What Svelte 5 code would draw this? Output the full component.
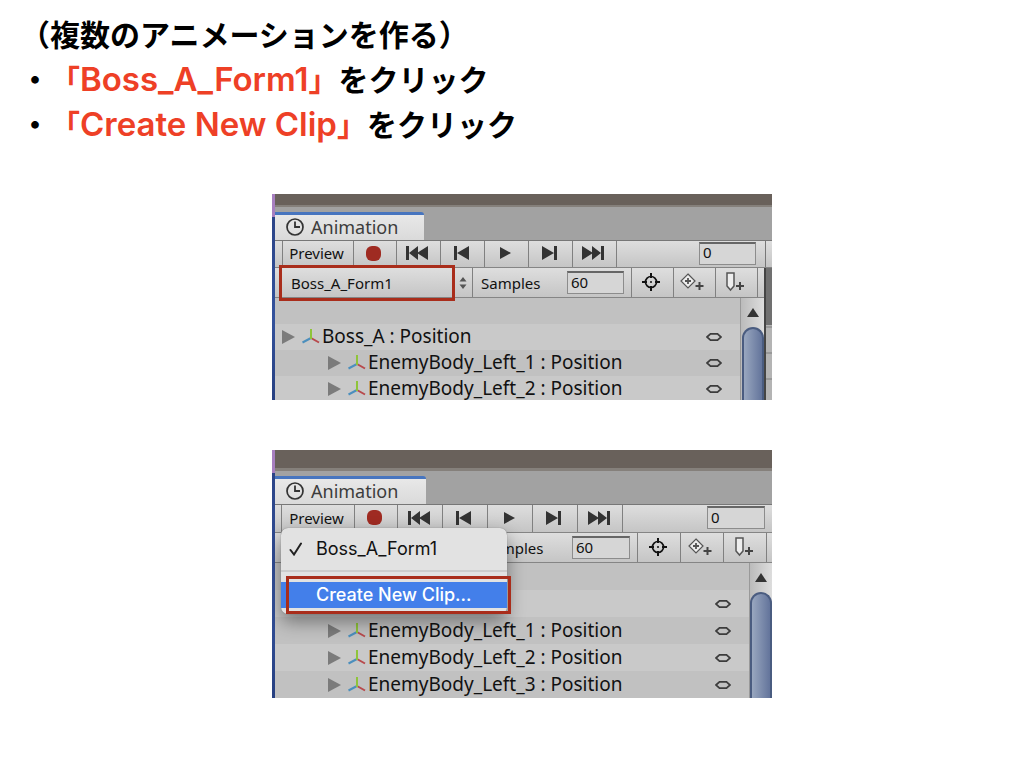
<script lang="ts">
  type Panel = {
    id: string;
    menuOpen: boolean;
    rows: { label: string; child: boolean }[];
  };

  const clip = "Boss_A_Form1";

  const panels: Panel[] = [
    {
      id: "closed",
      menuOpen: false,
      rows: [
        { label: "Boss_A : Position", child: false },
        { label: "EnemyBody_Left_1 : Position", child: true },
        { label: "EnemyBody_Left_2 : Position", child: true },
      ],
    },
    {
      id: "open",
      menuOpen: true,
      rows: [
        { label: "", child: false },
        { label: "EnemyBody_Left_1 : Position", child: true },
        { label: "EnemyBody_Left_2 : Position", child: true },
        { label: "EnemyBody_Left_3 : Position", child: true },
      ],
    },
  ];

  const transport = [
    { label: "First frame", d: "M0 1h3v14H0zM12 1v14L3 8zM22 1v14L11 8z", w: 22 },
    { label: "Previous key", d: "M0 1h3v14H0zM15 1v14L3 8z", w: 15 },
    { label: "Play", d: "M1 2l11 6-11 6z", w: 12 },
    { label: "Next key", d: "M0 1l12 7-12 7zM12 1h3v14h-3z", w: 15 },
    { label: "Last frame", d: "M0 1l11 7-11 7zM10 1l9 7-9 7zM19 1h3v14h-3z", w: 22 },
  ];
</script>

<main>
  <header>
    <h1>（複数のアニメーションを作る）</h1>
    <p>・<em>「<span>Boss_A_Form1</span>」</em>をクリック</p>
    <p>・<em>「<span>Create New Clip</span>」</em>をクリック</p>
  </header>

  {#each panels as panel}
    <section class="panel {panel.id}">
      <div class="scene"></div>
      <div class="window">
        <div class="strip"></div>
        <div class="tabs">
          <div class="tab">
            <svg width="20" height="20" viewBox="0 0 20 20" fill="none" stroke="#333">
              <circle cx="10" cy="10" r="8" stroke-width="1.7" />
              <path d="M10 4.5V10h5" stroke-width="1.8" />
            </svg>
            Animation
          </div>
        </div>

        <div class="bar controls">
          <button class="preview">Preview</button>
          <button class="record" aria-label="Record"><span></span></button>
          {#each transport as t}
            <button class="step" aria-label={t.label}>
              <svg width={t.w} height="16" viewBox="0 0 {t.w} 16"><path d={t.d} fill="#333" /></svg>
            </button>
          {/each}
          <div class="rest">
            <input type="text" aria-label="Frame" value="0" />
          </div>
          <div class="bar-end"></div>
        </div>

        <div class="body">
          <div class="content">
            <div class="bar clips">
              <div class="clip">
                <select aria-label="Clip">
                  <option>{clip}</option>
                </select>
                <svg width="8" height="12" viewBox="0 0 8 12" fill="#555">
                  <path d="M4 0l3.5 4.5h-7zM4 12L.5 7.5h7z" />
                </svg>
                {#if !panel.menuOpen}
                  <div class="mark"></div>
                {/if}
              </div>
              <label class="samples">
                Samples
                <input type="text" value="60" />
              </label>
              <button class="tool" aria-label="Filter by selection">
                <svg width="20" height="20" viewBox="0 0 20 20" fill="none" stroke="#111">
                  <circle cx="10" cy="10" r="5.5" stroke-width="1.7" />
                  <path d="M10 1v5M10 14v5M1 10h5M14 10h5" stroke-width="2" />
                  <circle cx="10" cy="10" r="1" fill="#111" stroke="none" />
                </svg>
              </button>
              <button class="tool" aria-label="Add keyframe">
                <svg width="26" height="20" viewBox="0 0 26 20" fill="none">
                  <path d="M8 2l7 7-7 7-7-7z" fill="#eee" stroke="#555" stroke-width="1.2" />
                  <path d="M8 6v6M5 9h6" stroke="#555" stroke-width="1.8" />
                  <path d="M19.500 10v8M15.500 14h8" stroke="#444" stroke-width="2" />
                </svg>
              </button>
              <button class="tool" aria-label="Add event">
                <svg width="22" height="22" viewBox="0 0 22 22" fill="none">
                  <path d="M3 2h7v13l-3.500 4L3 15z" fill="#eee" stroke="#555" stroke-width="1.500" />
                  <path d="M16 11v8M12 15h8" stroke="#444" stroke-width="2" />
                </svg>
              </button>
              <div class="tool-end"></div>

              {#if panel.menuOpen}
                <div class="menu">
                  <button>
                    <svg width="14" height="14" viewBox="0 0 14 14" fill="none" stroke="#222">
                      <path d="M1.500 8l3.500 4.500L12 1.500" stroke-width="2" stroke-linecap="round" />
                    </svg>
                    {clip}
                  </button>
                  <hr />
                  <button class="active">Create New Clip...</button>
                  <div class="mark"></div>
                </div>
              {/if}
            </div>

            <div class="tree">
              <ul>
                <li></li>
                {#each panel.rows as row}
                  <li class:child={row.child}>
                    {#if row.label}
                      <svg width="13" height="14" viewBox="0 0 13 14">
                        <path d="M0 0l13 7-13 7z" fill="#7b7b7b" />
                      </svg>
                      <svg width="18" height="18" viewBox="0 0 18 18" fill="none" stroke-width="2">
                        <path d="M9 10l8 4.500" stroke="#b8494c" />
                        <path d="M9 10l-8.500 4.500" stroke="#4c8fbd" />
                        <path d="M9 11V1" stroke="#8fc43a" />
                      </svg>
                      <span>{row.label}</span>
                    {/if}
                    <svg class="key" width="16" height="10" viewBox="0 0 16 10" fill="none" stroke="#3c3c3c">
                      <path d="M1 5l3.500-3.200h7L15 5l-3.500 3.200h-7z" stroke-width="1.700" />
                    </svg>
                  </li>
                {/each}
              </ul>
              <div class="scroll">
                <svg width="12" height="9" viewBox="0 0 12 9"><path d="M6 0l6 9H0z" fill="#333" /></svg>
                <div class="thumb"></div>
              </div>
            </div>
          </div>
          <div class="side"></div>
        </div>
      </div>
    </section>
  {/each}
</main>

<style>
  :global(body) {
    margin: 0;
    background: #fff;
  }
  main {
    display: flex;
    flex-direction: column;
    align-items: center;
    gap: 50px;
    padding: 11px 0 50px 20px;
  }
  header {
    align-self: stretch;
    margin-bottom: -2px;
    color: #000;
    font: 700 30px/45px "Noto Sans CJK JP", sans-serif;
    text-spacing-trim: space-all;
  }
  h1, p {
    height: 45px;
    margin: 0;
    font: inherit;
  }
  em {
    color: #ee4026;
    font-style: normal;
  }
  em span {
    font: 600 33px/45px "Inter", sans-serif;
  }
  .panel {
    --step: 44px;
    --row: 26px;
    --field: 57px;
    display: flex;
    width: min(500px, 100%);
    overflow: hidden;
    color: #111;
    font: 15px/20px "Noto Sans", sans-serif;
  }
  .closed {
    height: 206px;
  }
  .open {
    --step: 45px;
    --row: 27px;
    --field: 58px;
    height: 248px;
  }
  .scene {
    width: 3px;
    background: linear-gradient(#a77fc0 23px, #2b4487 23px, #34529c 60%, #263f80);
  }
  .window {
    flex: 1;
    min-width: 0;
    background: #a2a2a2;
  }
  .strip {
    height: 11px;
    border-bottom: 2px solid #85807b;
    background: #69615b;
  }
  .open .strip {
    height: 18px;
    border-bottom-width: 3px;
  }
  .tabs {
    display: flex;
    align-items: end;
    height: 33px;
    border-bottom: 1px solid #777;
  }
  .tab {
    display: flex;
    align-items: center;
    gap: 6px;
    box-sizing: border-box;
    width: 149px;
    height: 28px;
    padding: 0 0 2px 10px;
    border-top: 3px solid #4775bf;
    border-radius: 0 3px 0 0;
    background: linear-gradient(#e8e8e8, #dadada);
    color: #3c3c3c;
    font-size: 18px;
  }
  .open .tab {
    width: 151px;
  }
  .bar {
    position: relative;
    display: flex;
    box-sizing: border-box;
    border-bottom: 1px solid #858585;
    background: linear-gradient(#dedede, #c5c5c5);
  }
  .controls {
    height: 27px;
    padding-left: 7px;
  }
  .open .controls {
    height: 28px;
    padding-left: 6px;
  }
  .clips {
    height: 30px;
  }
  button {
    display: flex;
    align-items: center;
    justify-content: center;
    box-sizing: border-box;
    padding: 0;
    border: 0;
    background: none;
    color: inherit;
    font: inherit;
  }
  .bar > button {
    padding: 0 3px 2px 0;
    border-left: 1px solid #808080;
  }
  .preview {
    width: 71px;
  }
  .open .preview {
    width: 73px;
  }
  .record {
    width: 43px;
  }
  .record span {
    width: 15px;
    height: 15px;
    border-radius: 6px;
    background: #9f2b22;
  }
  .step {
    width: var(--step);
  }
  .rest {
    display: flex;
    flex: 1;
    align-items: center;
    justify-content: end;
    padding: 0 9px 2px 0;
    border-left: 1px solid #808080;
  }
  .open .rest {
    padding-right: 7px;
  }
  .bar-end {
    width: 6px;
    border-left: 1px solid #777;
  }
  .open .bar-end {
    display: none;
  }
  input {
    box-sizing: border-box;
    width: var(--field);
    height: 23px;
    padding: 0 3px 3px;
    border: 1px solid #8c8c8c;
    border-top: 2px solid #666;
    background: #d6d6d6;
    color: #111;
    font: inherit;
  }
  .body {
    display: flex;
    height: 100%;
  }
  .content {
    flex: 1;
    min-width: 0;
  }
  .side {
    width: 6px;
    border-left: 2px solid #444;
    background: linear-gradient(#707070 57px, transparent 57px),
      repeating-linear-gradient(#b4b4b4 0 24px, #999 24px 26px) 0 8px;
  }
  .open .side {
    display: none;
  }
  .clip {
    position: relative;
    display: flex;
    align-items: center;
    width: 197px;
    box-sizing: border-box;
    padding-left: 6px;
  }
  select {
    width: 178px;
    padding: 0 10px;
    border: 0;
    appearance: none;
    background: none;
    color: #111;
    font: inherit;
  }
  .mark {
    position: absolute;
    inset: -3px 17px -4px 4px;
    border: 3px solid #a92d1b;
  }
  .samples {
    display: flex;
    flex: 1;
    align-items: center;
    justify-content: space-between;
    padding: 0 7px 0 8px;
    border-left: 1px solid #808080;
  }
  .open .clip {
    width: 200px;
  }
  .tool {
    width: 42px;
  }
  .open .tool {
    width: 43px;
  }
  .tool-end {
    width: 6px;
    border-left: 1px solid #808080;
  }
  .open .tool-end {
    width: 5px;
  }
  .menu {
    position: absolute;
    z-index: 1;
    top: -5px;
    left: 6px;
    width: 226px;
    padding: 8px 0 6px;
    box-sizing: border-box;
    border-radius: 7px;
    background: #e2e2e2;
    box-shadow: 0 0 1px #666, 0 8px 18px #0006;
    font: 18px/26px "Inter", sans-serif;
  }
  .menu button {
    justify-content: start;
    gap: 13px;
    width: 100%;
    height: 26px;
    padding-left: 8px;
  }
  .menu hr {
    margin: 8px 0 10px;
    border: 0;
    border-top: 2px solid #ccc;
  }
  .menu .active {
    padding-left: 35px;
    background: #437fea;
    color: #fff;
    font-weight: 500;
  }
  .menu .mark {
    inset: 48px -4px 0 5px;
  }
  .tree {
    display: flex;
    height: 100%;
    background: #c8c8c8;
  }
  ul {
    flex: 1;
    margin: 0;
    padding: 0;
    list-style: none;
    font-size: 19px;
  }
  li {
    display: flex;
    align-items: center;
    gap: 7px;
    height: var(--row);
    padding: 0 18px 0 7px;
  }
  li:nth-child(odd) {
    background: #c1c1c1;
  }
  li:nth-child(even) {
    background: #c9c9c9;
  }
  li.child {
    padding-left: 53px;
  }
  li span {
    margin: -2px 0 0 -5px;
    white-space: nowrap;
  }
  .key {
    margin-left: auto;
  }
  .scroll {
    display: flex;
    flex-direction: column;
    align-items: center;
    gap: 10px;
    width: 23px;
    padding-top: 10px;
    border-left: 1px solid #999;
    background: linear-gradient(90deg, #bbb, #ddd);
  }
  .open .scroll {
    width: 22px;
  }
  .thumb {
    flex: 1;
    box-sizing: border-box;
    width: 22px;
    border: 2px solid #4a5c80;
    border-bottom: 0;
    border-radius: 11px 11px 0 0;
    background: linear-gradient(90deg, #99a7bf, #63749b);
  }
</style>
